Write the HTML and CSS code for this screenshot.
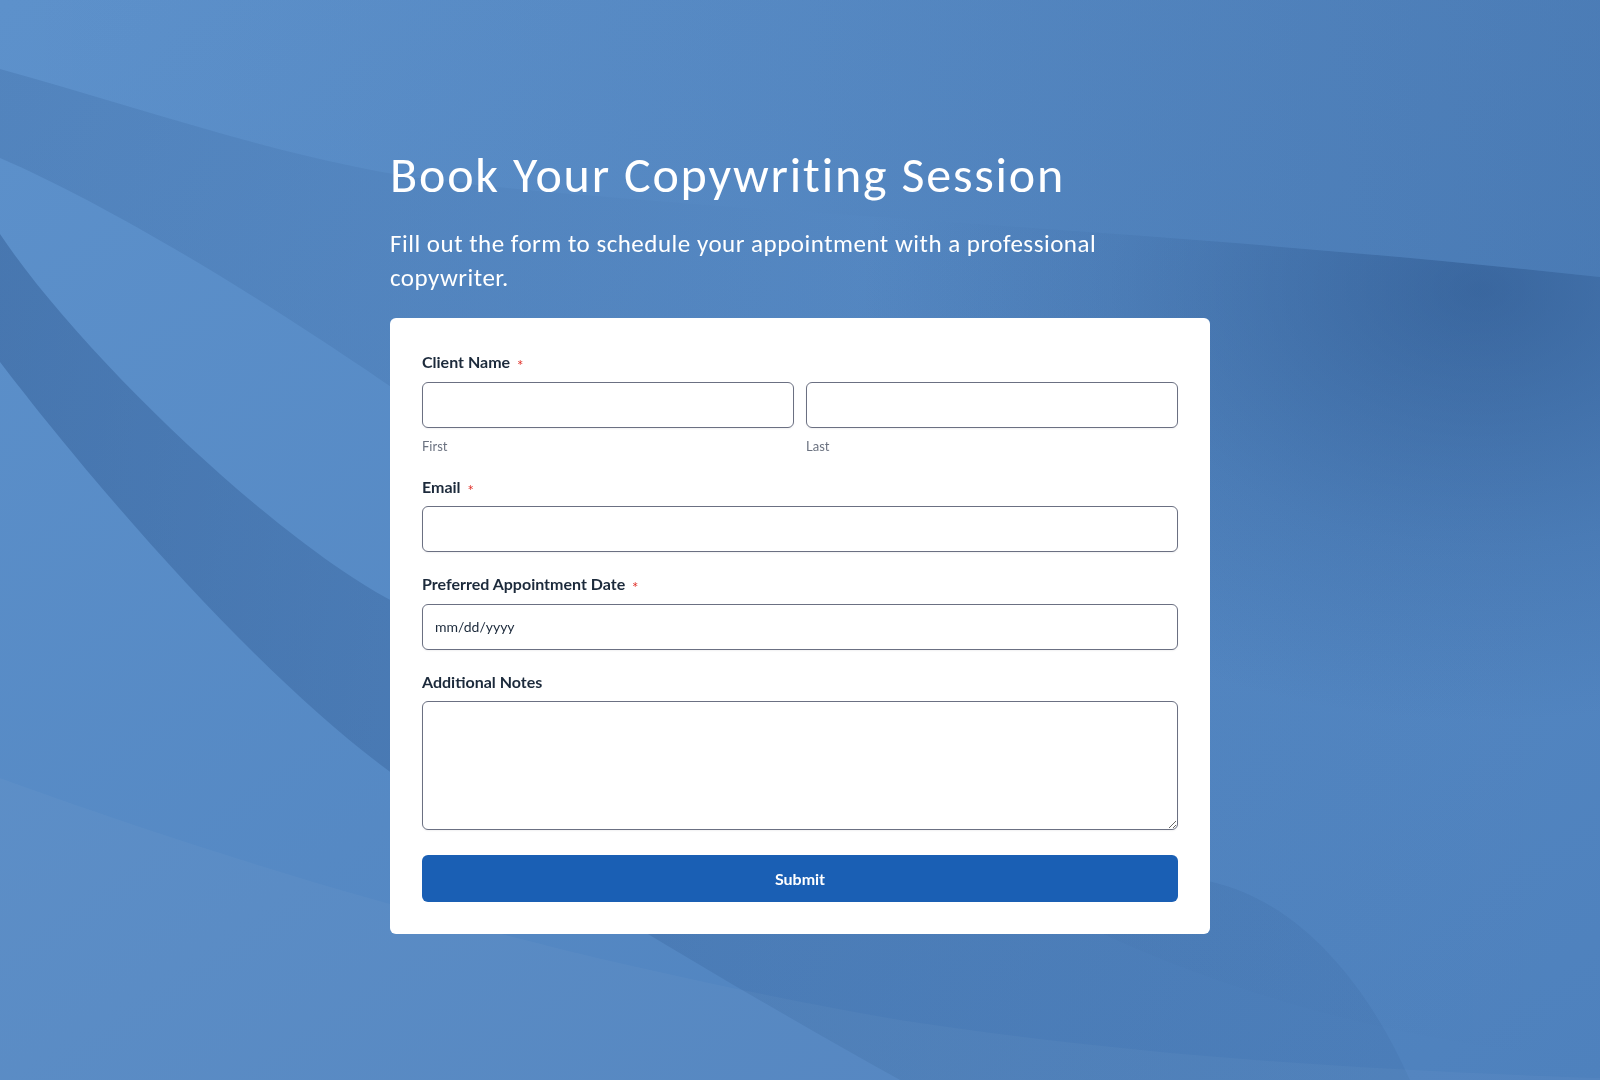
FILE: index.html
```html
<!DOCTYPE html>
<html lang="en">
<head>
<meta charset="utf-8">
<title>Book Your Copywriting Session</title>
<link rel="stylesheet" href="styles.css">
</head>
<body>
<div class="backdrop" aria-hidden="true">
  <svg viewBox="0 0 1600 1080" preserveAspectRatio="none" width="100%" height="100%">
    <defs>
      <linearGradient id="base" x1="0" y1="0" x2="1" y2="1">
        <stop offset="0" stop-color="#5d91cb"/>
        <stop offset="1" stop-color="#4e81bd"/>
      </linearGradient>
      <linearGradient id="topShade" x1="0" y1="0" x2="1" y2="0">
        <stop offset="0" stop-color="#163a6e" stop-opacity="0"/>
        <stop offset="0.5" stop-color="#163a6e" stop-opacity="0.06"/>
        <stop offset="1" stop-color="#163a6e" stop-opacity="0.16"/>
      </linearGradient>
      <linearGradient id="bandA" x1="0" y1="0" x2="1600" y2="0" gradientUnits="userSpaceOnUse">
        <stop offset="0" stop-color="#1a3f75" stop-opacity="0.15"/>
        <stop offset="0.75" stop-color="#1a3f75" stop-opacity="0.02"/>
        <stop offset="1" stop-color="#1a3f75" stop-opacity="0"/>
      </linearGradient>
      <linearGradient id="bandB" x1="0" y1="0" x2="1600" y2="0" gradientUnits="userSpaceOnUse">
        <stop offset="0" stop-color="#1a3f75" stop-opacity="0.3"/>
        <stop offset="0.45" stop-color="#1a3f75" stop-opacity="0.14"/>
        <stop offset="0.9" stop-color="#1a3f75" stop-opacity="0.07"/>
      </linearGradient>
      <radialGradient id="darkTR" cx="1480" cy="290" r="620" gradientUnits="userSpaceOnUse" gradientTransform="translate(1480 290) scale(1 0.7) translate(-1480 -290)">
        <stop offset="0" stop-color="#163a6e" stop-opacity="0.42"/>
        <stop offset="0.6" stop-color="#163a6e" stop-opacity="0.13"/>
        <stop offset="1" stop-color="#163a6e" stop-opacity="0"/>
      </radialGradient>
      <clipPath id="belowTop">
        <path d="M0,69 C150,110 300,165 450,182 C750,215 1150,228 1600,277 L1600,1080 L0,1080 Z"/>
      </clipPath>
    </defs>
    <rect width="1600" height="1080" fill="url(#base)"/>
    <path d="M0,0 H1600 V277 C1150,228 750,215 450,182 C300,165 150,110 0,69 Z" fill="url(#topShade)"/>
    <path d="M0,69 C150,110 300,165 450,182 C750,215 1150,228 1600,277 L1600,1060 C900,1000 650,570 400,393 C280,310 120,210 0,158 Z" fill="url(#bandA)"/>
    <rect width="1600" height="1080" fill="url(#darkTR)" clip-path="url(#belowTop)"/>
    <path d="M0,234 C80,354 280,545 400,605 C700,820 1000,850 1197,879 C1300,895 1370,990 1410,1080 L900,1080 C720,980 540,870 400,779 C260,680 90,480 0,362 Z" fill="url(#bandB)"/>
    <path d="M0,778 C200,850 500,950 900,1020 C1100,1050 1300,1068 1600,1078 L1600,1080 L0,1080 Z" fill="#ffffff" fill-opacity="0.03"/>
  </svg>
</div>

<main class="page">
  <h1 class="title">Book Your Copywriting Session</h1>
  <p class="intro">Fill out the form to schedule your appointment with a professional copywriter.</p>

  <form class="card">
    <div class="field">
      <label class="label">Client Name <span class="req">*</span></label>
      <div class="name-row">
        <div class="name-col">
          <input class="input" type="text" aria-label="First">
          <span class="sublabel">First</span>
        </div>
        <div class="name-col">
          <input class="input" type="text" aria-label="Last">
          <span class="sublabel">Last</span>
        </div>
      </div>
    </div>

    <div class="field">
      <label class="label">Email <span class="req">*</span></label>
      <input class="input" type="email">
    </div>

    <div class="field">
      <label class="label">Preferred Appointment Date <span class="req">*</span></label>
      <input class="input date" type="text" placeholder="mm/dd/yyyy">
    </div>

    <div class="field">
      <label class="label">Additional Notes</label>
      <textarea class="input textarea"></textarea>
    </div>

    <button class="submit" type="button">Submit</button>
  </form>
</main>
</body>
</html>
```

FILE: styles.css
```css
html, body {
  margin: 0;
  padding: 0;
}

body {
  min-height: 1080px;
  font-family: Lato, "Open Sans", Arial, sans-serif;
  color: #1c2a3b;
  background: #5588c4;
}

.backdrop {
  position: fixed;
  inset: 0;
  z-index: 0;
}

.backdrop svg {
  display: block;
}

.page {
  position: relative;
  z-index: 1;
  width: 820px;
  margin: 0 auto;
  padding-top: 145px;
}

.title {
  margin: 0 0 22px;
  font-family: Carlito, Calibri, Lato, sans-serif;
  font-weight: 400;
  font-size: 50px;
  line-height: 1.2;
  letter-spacing: 1.8px;
  color: #ffffff;
}

.intro {
  margin: 0 0 24px;
  max-width: 740px;
  font-family: Carlito, Calibri, Lato, sans-serif;
  font-size: 25px;
  line-height: 33.6px;
  letter-spacing: 0.5px;
  color: #ffffff;
}

.card {
  background: #ffffff;
  border-radius: 6px;
  padding: 33px 32px 32px;
}

.field {
  margin-bottom: 21px;
}

.label {
  display: block;
  margin-bottom: 8px;
  font-size: 16px;
  font-weight: 700;
  line-height: 1.4;
  color: #1c2a3b;
}

.req {
  color: #e0312a;
  font-size: 15px;
  font-weight: 400;
  margin-left: 3px;
  line-height: 1;
  vertical-align: -3px;
}

.name-row {
  display: grid;
  grid-template-columns: 1fr 1fr;
  gap: 12px;
}

.name-col {
  display: flex;
  flex-direction: column;
}

.sublabel {
  margin-top: 9px;
  font-size: 13px;
  line-height: 1.4;
  color: #6b7280;
}

.input {
  display: block;
  box-sizing: border-box;
  width: 100%;
  height: 46px;
  margin: 0;
  padding: 0 12px;
  border: 1px solid #6b7082;
  border-radius: 6px;
  background: #ffffff;
  box-shadow: 0 1px 2px rgba(15, 23, 42, 0.06);
  font-family: Lato, "Open Sans", Arial, sans-serif;
  font-size: 14px;
  color: #1c2a3b;
  outline: none;
}

.date::placeholder {
  color: #1c2a3b;
  opacity: 1;
}

.textarea {
  height: 129px;
  padding: 10px 12px;
  resize: vertical;
}

.submit {
  display: block;
  width: 100%;
  height: 47px;
  margin-top: 25px;
  border: 0;
  border-radius: 6px;
  background: #1a5fb4;
  color: #ffffff;
  font-family: Lato, "Open Sans", Arial, sans-serif;
  font-size: 16px;
  font-weight: 700;
  cursor: pointer;
}
```
